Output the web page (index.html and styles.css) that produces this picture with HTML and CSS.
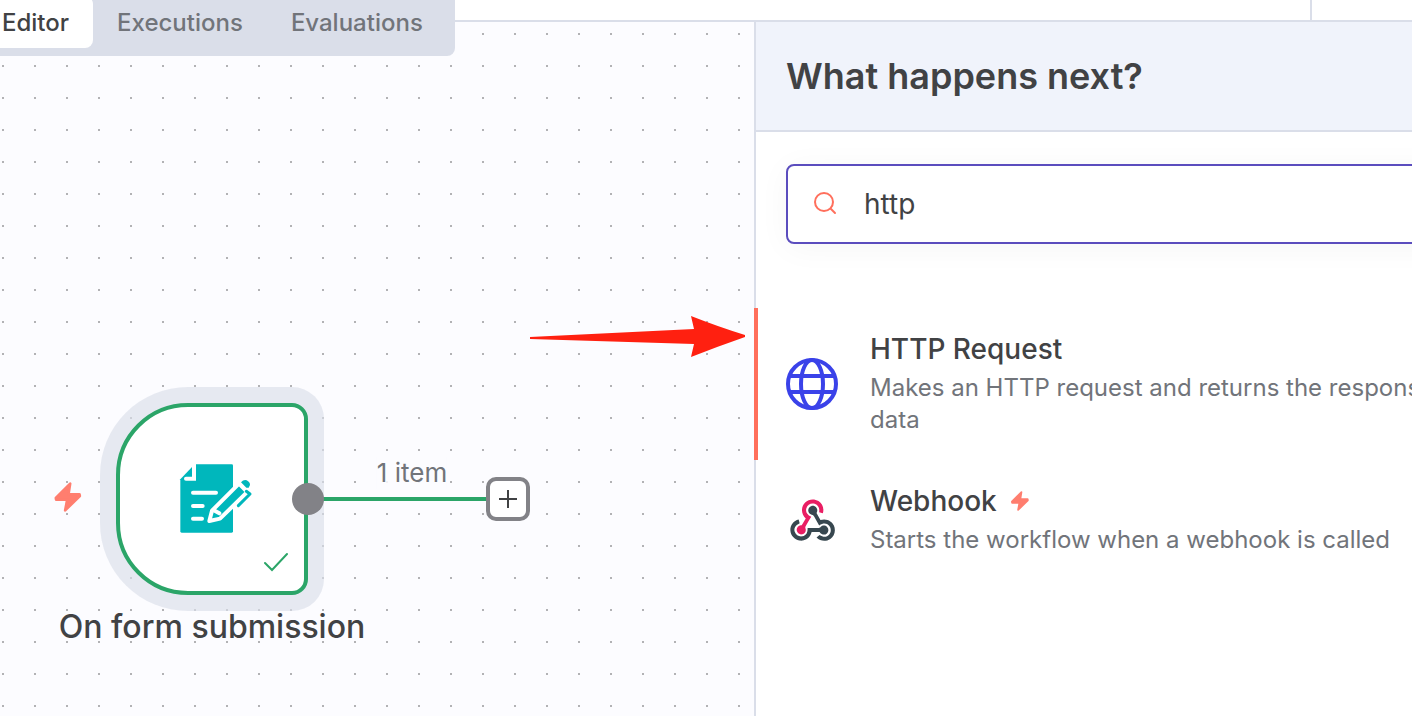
FILE: index.html
```html
<!DOCTYPE html>
<html lang="en">
<head>
    <meta charset="UTF-8">
    <meta name="viewport" content="width=device-width, initial-scale=1.0">
    <title>Workflow editor</title>
    <link rel="stylesheet" href="styles.css">
</head>
<body>
    <header class="topbar">
        <nav class="tabs">
            <button class="tab active">Editor</button>
            <button class="tab">Executions</button>
            <button class="tab">Evaluations</button>
        </nav>
        <div class="topbar-end"></div>
    </header>

    <div class="workspace">
        <main class="canvas">
            <svg class="trigger-bolt" viewBox="74 66 81 90">
                <path class="bolt" d="M121 71L78 114L79 119L112 119L106 151L150 108L149 103L116 103Z"/>
            </svg>

            <div class="node">
                <svg class="form-icon" viewBox="0 0 300 300">
                    <path fill="#00b7bc" d="M74 43H185q4 0 4 4V244q0 4-4 4H35q-4 0-4-4V88Z"/>
                    <path class="cut" d="M72 38V86H48"/>
                    <path class="cut" d="M69 128H138M69 168H98M69 206H96"/>
                    <path class="pencil" d="M118 213L126 182L207 101L232 126L150 206Z"/>
                    <path class="cut" d="M130 180L148 190"/>
                    <path fill="#00b7bc" d="M213 97q8-9 17-6q10 5 10 14l-4 8h-7Z"/>
                    <path class="clip" d="M229 124L240 132L205 167"/>
                </svg>
                <svg class="check-icon" viewBox="0 0 24 20">
                    <path d="M1 11L8 18L23 2"/>
                </svg>
            </div>
            <div class="node-label">On form submission</div>

            <div class="edge"></div>
            <div class="edge-label">1 item</div>
            <div class="handle"></div>
            <button class="add-node" aria-label="Add node">
                <svg viewBox="0 0 18 18"><path d="M9 0V18M0 9H18"/></svg>
            </button>

            <svg class="arrow" viewBox="0 0 216 42">
                <path d="M0 21L164 13L161 0Q189 11 215 19V21Q189 30 161 41L164 28L0 23Z"/>
            </svg>
        </main>

        <aside class="panel">
            <div class="panel-header">
                <h1>What happens next?</h1>
            </div>
            <label class="search">
                <svg class="search-icon" viewBox="0 0 24 24">
                    <circle cx="10" cy="10" r="9"/>
                    <path d="M17 17L21 21"/>
                </svg>
                <input type="text" value="http" aria-label="Search nodes">
            </label>
            <ul class="results">
                <li>
                    <button class="result active">
                        <svg class="result-icon" viewBox="0 0 156 156">
                            <g fill="none" stroke="#3a42e9" stroke-width="12">
                                <circle cx="78" cy="78" r="72"/>
                                <ellipse cx="78" cy="78" rx="33" ry="72"/>
                                <path d="M10 54H146M10 102H146"/>
                            </g>
                        </svg>
                        <span class="result-text">
                            <span class="result-title">HTTP Request</span>
                            <span class="result-desc">Makes an HTTP request and returns the response data</span>
                        </span>
                    </button>
                </li>
                <li>
                    <button class="result">
                        <svg class="result-icon" viewBox="-25 -30 298 298">
                            <path fill="#e91e63" d="M119.54 100.503c-10.61 17.836-20.775 35.108-31.152 52.25-2.665 4.401-3.984 7.986-1.855 13.58 5.878 15.454-2.414 30.493-17.998 34.575-14.697 3.851-29.016-5.808-31.932-21.543-2.584-13.927 8.224-27.58 23.58-29.757 1.286-.184 2.6-.205 4.762-.367l23.358-39.168C73.612 95.465 64.868 78.39 66.803 57.23c1.368-14.957 7.25-27.883 18-38.477 20.59-20.288 52.002-23.573 76.246-8.001 23.284 14.958 33.948 44.094 24.858 69.031-6.854-1.858-13.756-3.732-21.343-5.79 2.854-13.865.743-26.315-8.608-36.981-6.178-7.042-14.106-10.733-23.12-12.093-18.072-2.73-35.815 8.88-41.08 26.618-5.976 20.13 3.069 36.575 27.784 48.967z"/>
                            <path fill="#37474f" d="M149.841 79.41c7.475 13.187 15.065 26.573 22.587 39.836 38.02-11.763 66.686 9.284 76.97 31.817 12.422 27.219 3.93 59.457-20.465 76.25-25.04 17.238-56.707 14.293-78.892-7.851 5.654-4.733 11.336-9.487 17.407-14.566 21.912 14.192 41.077 13.524 55.305-3.282 12.133-14.337 11.87-35.714-.615-49.75-14.408-16.197-33.707-16.691-57.035-1.143-9.677-17.168-19.522-34.199-28.893-51.491-3.16-5.828-6.648-9.21-13.77-10.443-11.893-2.062-19.571-12.275-20.032-23.717-.453-11.316 6.214-21.545 16.634-25.53 10.322-3.949 22.435-.762 29.378 8.014 5.674 7.17 7.477 15.24 4.491 24.083-.83 2.466-1.905 4.852-3.07 7.774z"/>
                            <path fill="#37474f" d="M167.707 187.21h-45.77c-4.387 18.044-13.863 32.612-30.19 41.876-12.693 7.2-26.373 9.641-40.933 7.29-26.808-4.323-48.728-28.456-50.658-55.63-2.184-30.784 18.975-58.147 47.178-64.293 1.947 7.071 3.915 14.21 5.862 21.264-25.876 13.202-34.832 29.836-27.59 50.636 6.375 18.304 24.484 28.337 44.147 24.457 20.08-3.962 30.204-20.65 28.968-47.432 19.036 0 38.088-.197 57.126.097 7.434.117 13.173-.654 18.773-7.208 9.22-10.784 26.191-9.811 36.121.374 10.148 10.409 9.662 27.157-1.077 37.127-10.361 9.62-26.73 9.106-36.424-1.26-1.992-2.136-3.562-4.673-5.533-7.298z"/>
                        </svg>
                        <span class="result-text">
                            <span class="result-title">Webhook
                                <svg class="title-bolt" viewBox="74 66 81 90">
                                    <path class="bolt" d="M121 71L78 114L79 119L112 119L106 151L150 108L149 103L116 103Z"/>
                                </svg>
                            </span>
                            <span class="result-desc">Starts the workflow when a webhook is called</span>
                        </span>
                    </button>
                </li>
            </ul>
        </aside>
    </div>
</body>
</html>
```
FILE: styles.css
```css
* {
    margin: 0;
    padding: 0;
    box-sizing: border-box;
}
body {
    font-family: Inter, "Liberation Sans", sans-serif;
    color: #414244;
    background: white;
    height: 100vh;
    overflow: hidden;
    display: flex;
    flex-direction: column;
}
button {
    font-family: inherit;
    color: inherit;
    border: none;
    background: none;
    cursor: pointer;
}

/* Top bar */
.topbar {
    position: relative;
    z-index: 1;
    flex: none;
    display: flex;
    justify-content: flex-end;
    height: 22px;
    border-bottom: 2px solid #dadee9;
}
.topbar-end {
    width: 102px;
    border-left: 2px solid #dadee9;
}
.tabs {
    position: absolute;
    left: -30px;
    top: -12px;
    display: flex;
    padding: 8px;
    border-radius: 8px;
    background: #dadee9;
}
.tab {
    height: 52px;
    padding: 0 24px;
    border-radius: 8px;
    font-size: 24px;
    font-weight: 500;
    color: #71747a;
}
.tab.active {
    background: white;
    color: #414244;
}

.workspace {
    flex: 1;
    min-height: 0;
    display: flex;
    overflow: hidden;
}

/* Canvas */
.canvas {
    position: relative;
    flex: 1;
    min-width: 0;
    background-color: #fcfcff;
    background-image: conic-gradient(from 270deg at 2px 2px, #b2b2b5 90deg, transparent 0);
    background-size: 32px 32px;
    background-position: 2px 11px;
}
.node {
    position: absolute;
    left: 116px;
    top: 381px;
    width: 192px;
    height: 192px;
    border: 4px solid #2ba568;
    border-radius: 72px 16px 16px 72px;
    background: white;
    box-shadow: 0 0 0 16px rgba(218, 222, 233, 0.65);
}
.form-icon {
    position: absolute;
    left: 50px;
    top: 43px;
    width: 100px;
    height: 100px;
}
.cut {
    fill: none;
    stroke: white;
    stroke-width: 12;
    stroke-linecap: round;
}
.pencil {
    fill: #00b7bc;
    stroke: white;
    stroke-width: 12;
    stroke-linejoin: round;
}
.clip {
    fill: none;
    stroke: #00b7bc;
    stroke-width: 9;
    stroke-linecap: round;
    stroke-linejoin: round;
}
.check-icon {
    position: absolute;
    right: 16px;
    bottom: 19px;
    width: 24px;
    height: 20px;
    fill: none;
    stroke: #2ba568;
    stroke-width: 2;
    stroke-linecap: round;
}
.node-label {
    position: absolute;
    left: 212px;
    top: 585px;
    transform: translateX(-50%);
    font-size: 32px;
    font-weight: 500;
    line-height: 40px;
    white-space: nowrap;
}
.bolt {
    fill: #ff7e6f;
    stroke: #ff7e6f;
    stroke-width: 8;
    stroke-linejoin: round;
}
.trigger-bolt {
    position: absolute;
    left: 54px;
    top: 460px;
    width: 28px;
    height: 30px;
}
.edge {
    position: absolute;
    left: 308px;
    top: 475px;
    width: 180px;
    height: 4px;
    background: #2ba568;
}
.edge-label {
    position: absolute;
    left: 412px;
    top: 435px;
    transform: translateX(-50%);
    background: rgba(252, 252, 255, 0.85);
    color: #71747a;
    font-size: 26px;
    line-height: 32px;
    white-space: nowrap;
}
.handle {
    position: absolute;
    left: 292px;
    top: 461px;
    width: 32px;
    height: 32px;
    border-radius: 50%;
    background: #828287;
}
.add-node {
    position: absolute;
    left: 486px;
    top: 455px;
    width: 44px;
    height: 44px;
    display: flex;
    align-items: center;
    justify-content: center;
    border: 4px solid #828287;
    border-radius: 10px;
    background: white;
}
.add-node svg {
    width: 18px;
    height: 18px;
    stroke: #414244;
    stroke-width: 2;
}
.arrow {
    position: absolute;
    left: 530px;
    top: 294px;
    width: 216px;
    height: 42px;
    fill: #ff2010;
}

/* Node panel, runs past the right edge of the window */
.panel {
    flex: none;
    width: 770px;
    margin-right: -112px;
    border-left: 2px solid #dadee9;
    background: white;
}
.panel-header {
    padding: 32px 30px;
    border-bottom: 2px solid #dadee9;
    background: #f0f3fb;
}
.panel-header h1 {
    font-size: 36px;
    font-weight: 600;
    line-height: 44px;
}
.search {
    display: flex;
    align-items: center;
    gap: 26px;
    height: 80px;
    margin: 32px 30px 64px;
    padding: 0 26px;
    border: 2px solid #5b4dbe;
    border-radius: 8px;
    background: white;
    box-shadow: 0 4px 32px rgba(0, 0, 0, 0.04);
}
.search-icon {
    flex: none;
    width: 24px;
    height: 24px;
    fill: none;
    stroke: #ff6f5c;
    stroke-width: 2;
    stroke-linecap: round;
}
.search input {
    flex: 1;
    min-width: 0;
    border: none;
    outline: none;
    background: none;
    font-family: inherit;
    font-size: 28px;
    color: #414244;
}
.results {
    list-style: none;
}
.result {
    display: flex;
    align-items: center;
    gap: 32px;
    width: 100%;
    padding: 24px 30px;
    text-align: left;
}
.result.active {
    position: relative;
}
.result.active::before {
    content: "";
    position: absolute;
    left: -2px;
    top: 0;
    bottom: 0;
    width: 4px;
    background: #ff6f5c;
}
.result-icon {
    flex: none;
    width: 52px;
    height: 52px;
}
.result-text {
    display: flex;
    flex-direction: column;
    gap: 6px;
    max-width: 592px;
}
.result-title {
    display: flex;
    align-items: center;
    gap: 14px;
    font-size: 28px;
    font-weight: 500;
    line-height: 34px;
}
.title-bolt {
    width: 18px;
    height: 20px;
}
.result-desc {
    color: #71747a;
    font-size: 24px;
    line-height: 32px;
}
```
